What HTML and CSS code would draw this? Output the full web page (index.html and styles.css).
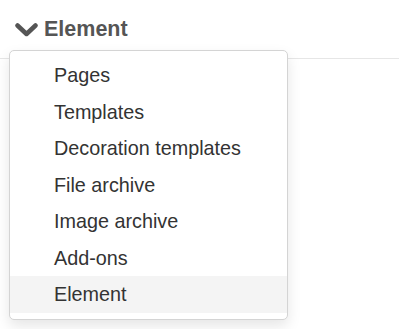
FILE: index.html
```html
<!DOCTYPE html>
<html lang="en">
<head>
  <meta charset="UTF-8" />
  <meta name="viewport" content="width=device-width, initial-scale=1.0" />
  <title>Element menu</title>
  <link rel="stylesheet" href="styles.css">
</head>
<body>
  <div class="toolbar">
    <button class="toggle">
      <svg class="chevron" width="23" height="14" viewBox="0 0 23 14">
        <polyline points="2.5,2.5 11.5,11 20.5,2.5" fill="none" stroke="#555" stroke-width="4.5" stroke-linecap="round" stroke-linejoin="round" />
      </svg>
      <span>Element</span>
    </button>
  </div>

  <ul class="menu">
    <li>Pages</li>
    <li>Templates</li>
    <li>Decoration templates</li>
    <li>File archive</li>
    <li>Image archive</li>
    <li>Add-ons</li>
    <li class="active">Element</li>
  </ul>
</body>
</html>
```

FILE: styles.css
```css
body {
  margin: 0;
  font-family: "Liberation Sans", Arial, sans-serif;
  background-color: #fff;
  color: #333;
}

.toolbar {
  height: 58px;
  border-bottom: 1px solid #e6e6e6;
  display: flex;
  align-items: flex-start;
}

.toggle {
  display: flex;
  align-items: center;
  gap: 6px;
  margin: 0;
  padding: 17px 0 0 15px;
  background: none;
  border: none;
  font-family: inherit;
  font-size: 21.5px;
  font-weight: bold;
  color: #555;
  cursor: pointer;
}

.chevron {
  display: block;
  margin-top: 1px;
}

.menu {
  position: absolute;
  top: 50px;
  left: 9px;
  width: 277px;
  margin: 0;
  padding: 6px 0;
  list-style: none;
  background-color: #fff;
  border: 1px solid #d4d4d4;
  border-radius: 5px;
  box-shadow: 0 6px 14px rgba(0, 0, 0, 0.1);
}

.menu li {
  height: 36.5px;
  line-height: 36.5px;
  padding-left: 44px;
  font-size: 19.8px;
  color: #333;
  cursor: pointer;
}

.menu li.active {
  background-color: #f4f4f4;
}
```
